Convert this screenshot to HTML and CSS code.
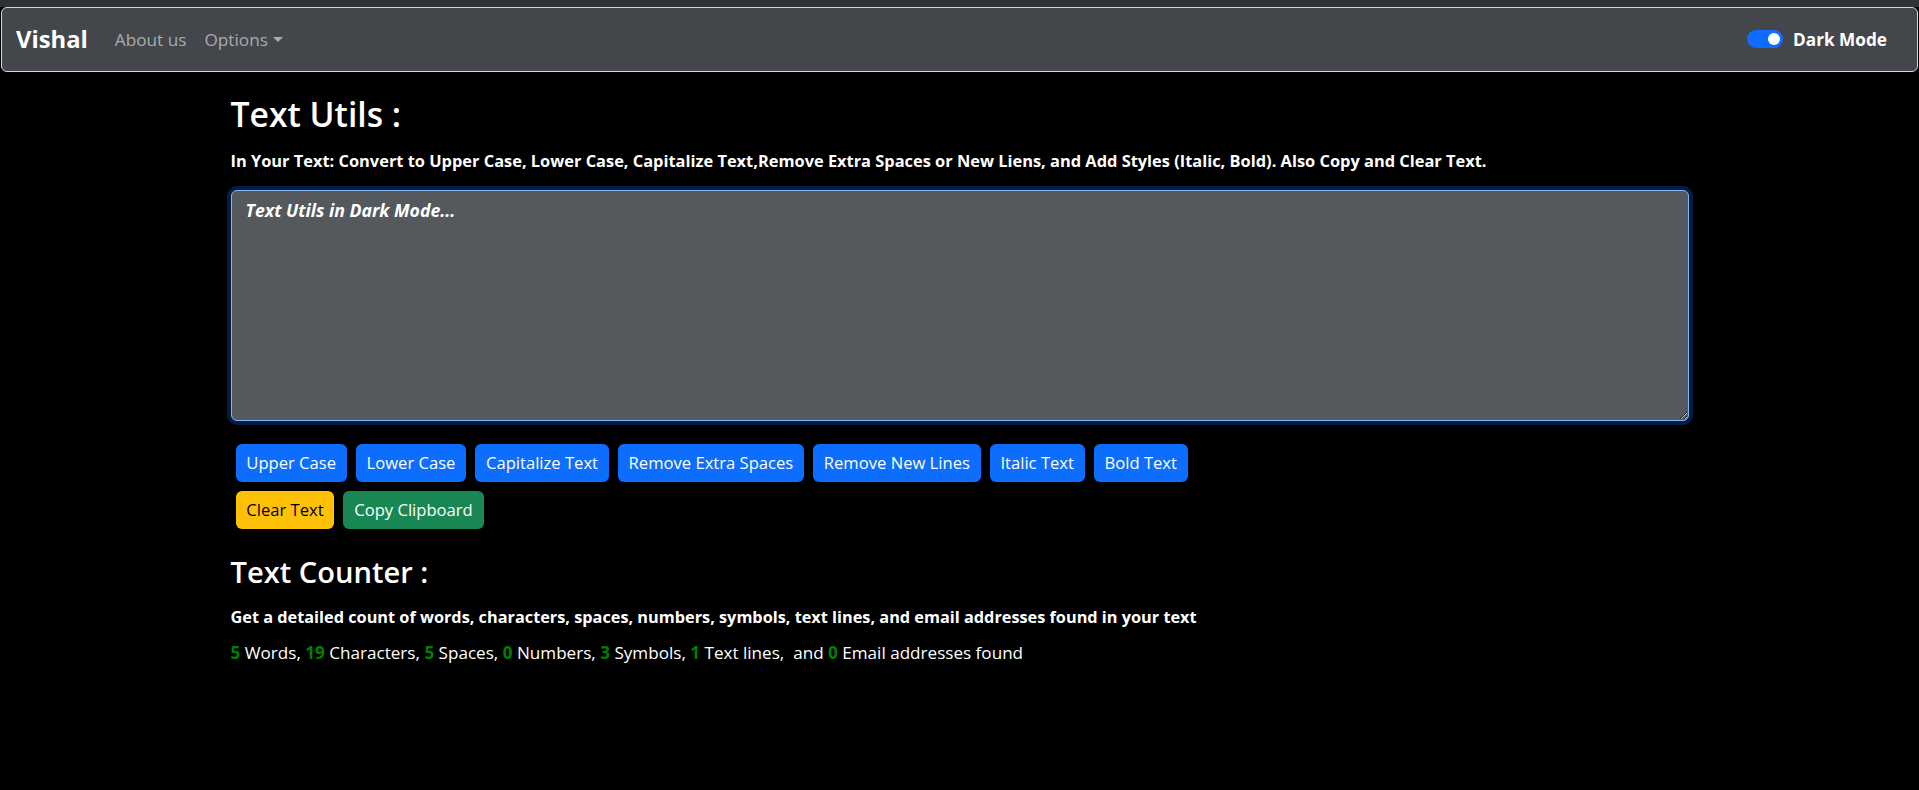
FILE: index.html
```html
<!DOCTYPE html>
<html lang="en">
<head>
<meta charset="utf-8">
<title>TextUtils</title>
<link rel="stylesheet" href="styles.css">
</head>
<body>
<div class="topstrip"></div>
<nav class="navbar">
  <div class="nav-left">
    <a class="brand" href="#">Vishal</a>
    <a class="nav-link" href="#">About us</a>
    <a class="nav-link dropdown" href="#">Options</a>
  </div>
  <div class="nav-right">
    <span class="switch"><span class="knob"></span></span>
    <span class="switch-label">Dark Mode</span>
  </div>
</nav>
<main class="container">
  <h1 class="title">Text Utils :</h1>
  <p class="subtitle">In Your Text: Convert to Upper Case, Lower Case, Capitalize Text,Remove Extra Spaces or New Liens, and Add Styles (Italic, Bold). Also Copy and Clear Text.</p>
  <textarea class="textbox" rows="8">Text Utils in Dark Mode...</textarea>
  <div class="btn-row first">
    <button class="btn btn-primary">Upper Case</button>
    <button class="btn btn-primary">Lower Case</button>
    <button class="btn btn-primary">Capitalize Text</button>
    <button class="btn btn-primary">Remove Extra Spaces</button>
    <button class="btn btn-primary">Remove New Lines</button>
    <button class="btn btn-primary">Italic Text</button>
    <button class="btn btn-primary">Bold Text</button>
  </div>
  <div class="btn-row">
    <button class="btn btn-warning">Clear Text</button>
    <button class="btn btn-success">Copy Clipboard</button>
  </div>
  <h2 class="title2">Text Counter :</h2>
  <p class="subtitle2">Get a detailed count of words, characters, spaces, numbers, symbols, text lines, and email addresses found in your text</p>
  <p class="counts"><b>5</b> Words, <b>19</b> Characters, <b>5</b> Spaces, <b>0</b> Numbers, <b>3</b> Symbols, <b>1</b> Text lines,&nbsp; and <b>0</b> Email addresses found</p>
</main>
</body>
</html>
```
FILE: styles.css
```css
* { box-sizing: border-box; }
html, body { margin: 0; padding: 0; }
body {
  background: #000;
  color: #fff;
  font-family: "Open Sans", "Noto Sans", sans-serif;
  font-size: 17.1px;
  line-height: 1.5;
}
.topstrip { height: 7px; background: #2f3235; }
.navbar {
  margin: 0 1px;
  height: 65px;
  background: #43474b;
  border: 1px solid #d4d6d8;
  border-radius: 6px;
  display: flex;
  align-items: center;
  justify-content: space-between;
  padding: 0 30px 0 14px;
}
.nav-left { display: flex; align-items: center; }
.brand {
  color: #fff;
  text-decoration: none;
  font-weight: 700;
  font-size: 23.8px;
  line-height: 1.2;
  margin-right: 27px;
}
.nav-link {
  color: #a9abad;
  text-decoration: none;
  font-size: 17.2px;
  margin-right: 18px;
}
.dropdown::after {
  content: "";
  display: inline-block;
  margin-left: 5px;
  vertical-align: 4px;
  border-top: 5px solid #a9abad;
  border-left: 5px solid transparent;
  border-right: 5px solid transparent;
}
.nav-right { display: flex; align-items: center; gap: 10px; }
.switch {
  width: 36px;
  height: 18px;
  border-radius: 9px;
  background: #0d6efd;
  display: flex;
  align-items: center;
  justify-content: flex-end;
  padding-right: 3px;
}
.knob { width: 12px; height: 12px; border-radius: 50%; background: #fff; }
.switch-label { font-weight: 700; font-size: 17.2px; }
.container {
  width: 1458px;
  margin: 0 auto;
  padding-top: 22px;
}
.title {
  margin: 0;
  font-size: 33.7px;
  font-weight: 600;
  line-height: 1.24;
}
.subtitle {
  margin: 13px 0 0;
  font-weight: 700;
  font-size: 16.4px;
}
.textbox {
  display: block;
  width: 100%;
  height: 231px;
  margin-top: 17px;
  background: #54595d;
  color: #fff;
  border: 1px solid #86b7fe;
  border-radius: 6px;
  box-shadow: 0 0 0 4px #031c3f;
  padding: 6px 14px;
  font-family: "Open Sans", "Noto Sans", sans-serif;
  font-size: 17.7px;
  font-weight: 700;
  font-style: italic;
  line-height: 1.5;
  outline: none;
}
.btn-row { display: flex; gap: 9px; padding-left: 5px; margin-top: 9px; }
.btn-row.first { margin-top: 23px; }
.btn {
  height: 38px;
  padding: 0 9.8px;
  border: 1px solid transparent;
  border-radius: 6px;
  font-family: "Open Sans", "Noto Sans", sans-serif;
  font-size: 16.6px;
  line-height: 26px;
  color: #fff;
}
.btn-primary { background: #0d6efd; }
.btn-warning { background: #ffc107; color: #000; }
.btn-success { background: #198754; }
.title2 {
  margin: 25px 0 0;
  font-size: 29.1px;
  font-weight: 600;
  line-height: 1.24;
}
.subtitle2 {
  margin: 15px 0 0;
  font-weight: 700;
  font-size: 16.3px;
}
.counts { margin: 10px 0 0; }
.counts b { color: #008000; }
```
